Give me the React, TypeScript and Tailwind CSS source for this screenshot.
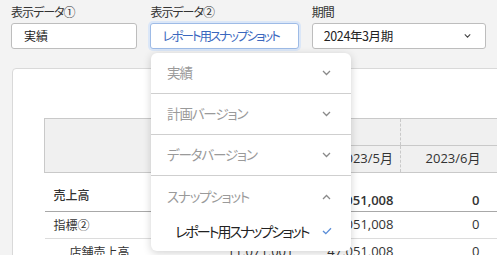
import React from 'react';

const jp = "font-['Noto_Sans_CJK_JP',sans-serif] [font-feature-settings:'palt'_1]";
const num = "font-['Open_Sans','Noto_Sans_CJK_JP',sans-serif]";

function Chevron({ up = false, className = '' }: { up?: boolean; className?: string }) {
  return (
    <svg width="9" height="6" viewBox="0 0 9 6" className={className}>
      <polyline
        points={up ? '1,5 4.5,1.5 8,5' : '1,1 4.5,4.5 8,1'}
        fill="none"
        stroke="currentColor"
        strokeWidth="1.3"
      />
    </svg>
  );
}

function Field({ label, width, children }: { label: string; width: string; children: React.ReactNode }) {
  return (
    <div className={width}>
      <div className="text-[12px] leading-[16px] tracking-[-1px] text-[#333] mb-[3px]">{label}</div>
      {children}
    </div>
  );
}

const months = ['2023/4月', '2023/5月', '2023/6月'];

const rows = [
  { label: '売上高', indent: 'pl-[9px]', values: ['11,071,001', '47,051,008', '0'] },
  { label: '指標②', indent: 'pl-[9px]', values: ['11,071,001', '47,051,008', '0'] },
  { label: '店舗売上高', indent: 'pl-[25px]', values: ['11,071,001', '47,051,008', '0'] },
];

export default function App() {
  return (
    <div className={`relative w-[497px] h-[255px] overflow-hidden bg-[#f3f3f3] ${jp}`}>
      {/* 上部フィルタ */}
      <div className="flex gap-[13px] px-[11px] pt-[4px]">
        <Field label="表示データ①" width="w-[127px]">
          <div className="h-[26px] flex items-center px-[12px] bg-white border border-[#bdbdbd] rounded-[3px] text-[12px] text-[#222]">
            実績
          </div>
        </Field>
        <Field label="表示データ②" width="w-[149px]">
          <div className="h-[26px] flex items-center px-[11px] bg-white border border-[#9ebbe6] rounded-[3px] ring-2 ring-[#dbe7f8] text-[12.5px] tracking-[-2px] text-[#3b67be] whitespace-nowrap overflow-hidden">
            レポート用スナップショット
          </div>
        </Field>
        <Field label="期間" width="w-[175px]">
          <div className="h-[26px] flex items-center justify-between pl-[11px] pr-[14px] bg-white border border-[#bdbdbd] rounded-[3px] text-[12.5px] tracking-[-0.4px] text-[#222]">
            <span>2024年3月期</span>
            <Chevron className="text-[#444] w-[7px]" />
          </div>
        </Field>
      </div>

      {/* テーブルカード */}
      <div className="ml-[12px] mt-[19px] w-[520px] h-[220px] bg-white border border-[#d9d9d9] rounded-[4px] pl-[31px] pt-[49px]">
        <table className="border-collapse text-[13px] text-[#333] table-fixed">
          <colgroup>
            <col className="w-[156px]" />
            <col className="w-[100px]" />
            <col className="w-[100px]" />
            <col className="w-[110px]" />
          </colgroup>
          <thead>
            <tr className="h-[27px]">
              <th rowSpan={2} className="bg-[#f0f0f0] border border-[#c9c9c9]" />
              <th colSpan={2} className="bg-[#f0f0f0] border-t border-b border-[#c9c9c9]" />
              <th className="bg-[#f0f0f0] border-t border-b border-l border-[#c9c9c9] [border-left-style:dashed]" />
            </tr>
            <tr className="h-[27px]">
              {months.map((m, i) => (
                <th
                  key={m}
                  className={`${num} bg-[#f0f0f0] border-b border-[#c9c9c9] font-normal text-right whitespace-nowrap ${
                    i === 2 ? 'pr-[30px] border-l [border-left-style:dashed]' : 'pr-[7px]'
                  }`}
                >
                  {m}
                </th>
              ))}
            </tr>
          </thead>
          <tbody>
            {rows.map((r, ri) => (
              <tr key={r.label} className={ri === 0 ? 'h-[39px] border-b border-[#a8a8a8]' : 'h-[27px] border-b border-[#dcdcdc]'}>
                <td className={`${r.indent} text-[12px] whitespace-nowrap ${ri === 0 ? 'align-top pt-[13px] font-medium' : ''}`}>{r.label}</td>
                {r.values.map((v, i) => (
                  <td
                    key={i}
                    className={`${num} text-right ${i === 2 ? 'pr-[31px]' : 'pr-[7px]'} ${ri === 0 ? 'align-top pt-[18px] font-semibold' : ''}`}
                  >
                    {v}
                  </td>
                ))}
              </tr>
            ))}
          </tbody>
        </table>
      </div>

      {/* ドロップダウン */}
      <div className="absolute left-[151px] top-[53px] w-[200px] h-[198px] bg-white rounded-[6px] shadow-[0_2px_8px_rgba(0,0,0,0.18)]">
        {['実績', '計画バージョン', 'データバージョン'].map((g) => (
          <div key={g} className="h-[41px] flex items-center justify-between pl-[16px] pr-[20px] border-b border-[#cfcfcf] text-[13.5px] tracking-[-1.1px] text-[#9a9a9a]">
            <span className="pb-[1px]">{g}</span>
            <Chevron className="text-[#8a8a8a]" />
          </div>
        ))}
        <div className="h-[41px] flex items-center justify-between pl-[16px] pr-[20px] text-[13.5px] tracking-[-1.2px] text-[#9a9a9a]">
          <span>スナップショット</span>
          <Chevron up className="text-[#8a8a8a]" />
        </div>
        <div className="h-[28px] flex items-center justify-between pl-[24px] pr-[19px] text-[14px] tracking-[-2px] text-[#222] whitespace-nowrap">
          <span>レポート用スナップショット</span>
          <svg width="10" height="8" viewBox="0 0 10 8" className="shrink-0">
            <polyline points="1,4 3.8,6.6 9,1.2" fill="none" stroke="#5b8ed8" strokeWidth="1.3" />
          </svg>
        </div>
      </div>
    </div>
  );
}
